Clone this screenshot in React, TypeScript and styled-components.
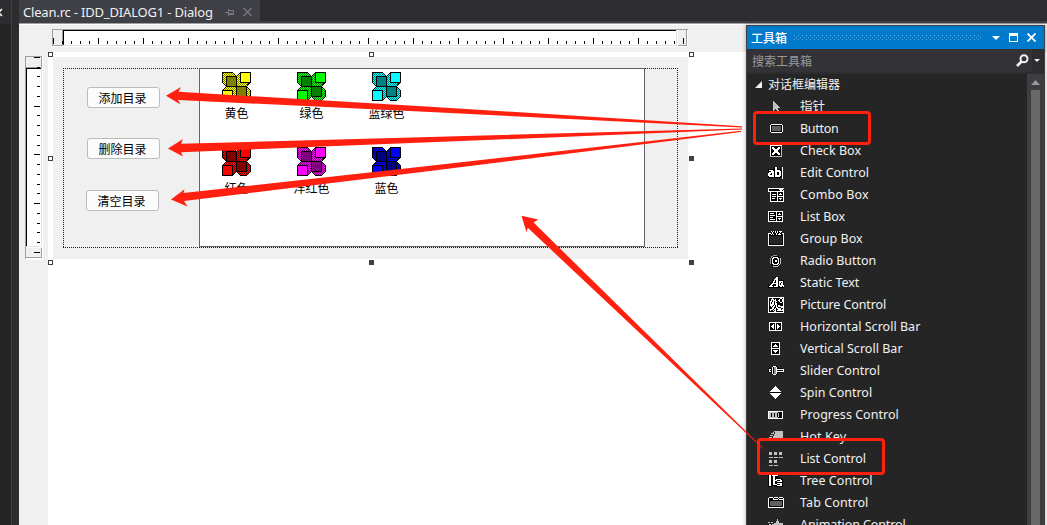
import React from "react";
import styled, { createGlobalStyle } from "styled-components";

const GlobalStyle = createGlobalStyle`
  * { box-sizing: border-box; }
  html, body { margin: 0; padding: 0; overflow: hidden; background: #fff; }
`;

const uiFont = `"Noto Sans", "Noto Sans CJK SC", sans-serif`;
const cjkFont = `"Noto Sans CJK SC", sans-serif`;

const Screen = styled.div`
  position: relative;
  display: flex;
  width: 1047px;
  height: 525px;
  overflow: hidden;
  background: #fff;
  font-family: ${uiFont};
`;

const SideDock = styled.aside`
  display: flex;
  width: 19px;
  flex: none;
  background: #2d2d30;
`;

const SideStrip = styled.div`
  width: 12px;
  background: #252526;
  border-right: 1px solid #3f3f46;
`;

const SideTab = styled.div`
  height: 24px;
  background: #2d2d30;
`;

const EditorPane = styled.main`
  display: flex;
  flex-direction: column;
  flex: 1;
  min-width: 0;
`;

const TabStrip = styled.header`
  display: flex;
  height: 24px;
  flex: none;
  background: #2d2d30;
  box-shadow: inset 0 -1px #a0a0a0, inset 0 -3px #3f3f46;
`;

const DocumentTab = styled.div`
  display: flex;
  align-items: center;
  width: 241px;
  height: 23px;
  padding: 0 0 0 4px;
  background: #3f3f46;
  color: #f1f1f1;
  font-size: 13px;
  letter-spacing: -0.18px;
  white-space: nowrap;
`;

const TabTitle = styled.span`
  width: 202px;
`;

const Workspace = styled.div`
  display: flex;
  flex-direction: column;
  flex: 1;
  background: #f0f0f0;
  border-top: 1px solid #fff;
`;

const HRulerRow = styled.div`
  height: 27px;
  flex: none;
  padding: 4px 0 0 33px;
`;

const DesignRow = styled.div`
  display: flex;
  flex: 1;
`;

const VRulerColumn = styled.div`
  width: 29px;
  flex: none;
  padding: 4px 0 0 6px;
`;

const Canvas = styled.div`
  position: relative;
  flex: 1;
  padding: 5px;
  background: #fff;
`;

const DialogSurface = styled.section`
  width: 635px;
  height: 202px;
  padding: 11px 10px;
  background: #f0f0f0;
`;

const dotsX = "repeating-linear-gradient(90deg, #0000ff 0 1px, #f0f0f0 1px 2px)";
const dotsY = "repeating-linear-gradient(180deg, #0000ff 0 1px, #f0f0f0 1px 2px)";

const MarginGuide = styled.div`
  display: flex;
  position: relative;
  width: 615px;
  height: 180px;
  padding: 1px;
  background:
    ${dotsX} 0 0 / 100% 1px no-repeat,
    ${dotsX} 0 100% / 100% 1px no-repeat,
    ${dotsY} 0 0 / 1px 100% no-repeat,
    ${dotsY} 100% 0 / 1px 100% no-repeat;
`;

const PushButton = styled.button<{ $x: number; $y: number }>`
  position: absolute;
  left: ${(p) => p.$x}px;
  top: ${(p) => p.$y}px;
  width: 73px;
  height: 21px;
  padding: 0 2px 1px 0;
  border: 1px solid #bcbcbc;
  border-radius: 3px;
  background: #fcfcfc;
  color: #000;
  font: 12px/19px ${cjkFont};
`;

const ListControl = styled.div`
  width: 446px;
  height: 179px;
  margin: -1px 0 0 135px;
  border: 1px solid #646464;
  background: #fff;
  display: grid;
  grid-template-columns: repeat(3, 75px);
  grid-auto-rows: 75px;
`;

const ListItem = styled.div`
  display: flex;
  flex-direction: column;
  align-items: center;
  padding: 3px 2px 0 0;
  gap: 2px;
  color: #000;
  font: 12px/20px ${cjkFont};
  white-space: nowrap;
`;

const Handle = styled.i<{ $x: number; $y: number; $solid?: boolean }>`
  position: absolute;
  left: ${(p) => p.$x}px;
  top: ${(p) => p.$y}px;
  width: 5px;
  height: 5px;
  border: 1px solid #404040;
  background: ${(p) => (p.$solid ? "#404040" : "#fff")};
`;

const ToolWindow = styled.aside`
  position: absolute;
  left: 746px;
  top: 25px;
  width: 299px;
  height: 510px;
  display: flex;
  flex-direction: column;
  border: 1px solid #3f3f46;
  background: #2d2d30;
  box-shadow: 0 0 4px rgba(0, 0, 0, 0.35);
`;

const TitleBar = styled.div`
  display: flex;
  align-items: center;
  height: 23px;
  flex: none;
  padding: 0 8px 0 4px;
  background: #007acc;
  color: #fff;
  font: 500 12px/22px ${cjkFont};
`;

const Caption = styled.span`
  width: 43px;
`;

const TitleGlyphs = styled.div`
  display: flex;
  align-items: center;
  gap: 9px;
  margin-left: auto;
`;

const SearchRow = styled.div`
  display: flex;
  align-items: center;
  height: 23px;
  flex: none;
  padding-left: 5px;
  background: #333337;
  color: #999;
  font: 12px/22px ${cjkFont};
`;

const SearchIcon = styled.div`
  display: flex;
  align-items: center;
  justify-content: flex-end;
  margin-left: auto;
  width: 20px;
  padding-right: 3px;
`;

const SearchDrop = styled.div`
  display: flex;
  align-items: center;
  justify-content: center;
  width: 12px;
  height: 23px;
  padding-right: 2px;
  background: #2d2d30;
`;

const ToolBody = styled.div`
  display: flex;
  flex: 1;
  min-height: 0;
  margin-top: 2px;
  overflow: hidden;
  background: #252526;
`;

const ToolList = styled.ul`
  flex: 1;
  margin: 0;
  padding: 0;
  list-style: none;
  overflow: hidden;
`;

const GroupHeader = styled.li`
  display: flex;
  align-items: center;
  gap: 6px;
  height: 22px;
  padding: 0 0 2px 8px;
  color: #f1f1f1;
  font: 12px/20px ${cjkFont};
`;

const ToolRow = styled.li`
  display: flex;
  align-items: center;
  gap: 16px;
  height: 22px;
  padding-left: 21px;
  color: #f1f1f1;
  font: 12.5px/22px ${uiFont};
  white-space: nowrap;
`;

const ToolLabel = styled.span<{ $spacing: number }>`
  letter-spacing: ${(p) => p.$spacing}px;
`;

const ScrollBar = styled.div`
  display: flex;
  flex-direction: column;
  align-items: center;
  width: 17px;
  padding-top: 6px;
  background: #3e3e42;
`;

const ScrollThumb = styled.div`
  width: 9px;
  flex: 1;
  margin-top: 5px;
  background: #686868;
`;

const Highlight = styled.div<{ $x: number; $y: number; $w: number; $h: number }>`
  position: absolute;
  left: ${(p) => p.$x}px;
  top: ${(p) => p.$y}px;
  width: ${(p) => p.$w}px;
  height: ${(p) => p.$h}px;
  border: 3px solid #ff2010;
  border-radius: 4px;
`;

const Arrows = styled.svg`
  position: absolute;
  left: 0;
  top: 0;
  pointer-events: none;
`;

const inks: Record<string, string> = {
  "#": "#ffffff",
  k: "#000000",
  g: "#c0c0c0",
  d: "#606060",
  m: "#999999",
};

/* Each character of a row is one pixel of a 16-pixel toolbox glyph. */
function PixelIcon({ rows }: { rows: string[] }) {
  const top = Math.floor((16 - rows.length) / 2);
  return (
    <svg width="16" height="16" shapeRendering="crispEdges">
      {rows.flatMap((row, y) =>
        [...row].map((c, x) =>
          inks[c] ? <rect key={`${x}-${y}`} x={x} y={y + top} width="1" height="1" fill={inks[c]} /> : null
        )
      )}
    </svg>
  );
}

const glyphs: Record<string, string[]> = {
  pointer: [
    ".....g..........",
    ".....gg.........",
    ".....ggg........",
    ".....gggg.......",
    ".....ggggg......",
    ".....gggggg.....",
    ".....ggggggg....",
    ".....ggggg......",
    ".....gg.gg......",
    ".....g...gg.....",
    ".........gg.....",
    "................",
  ],
  button: [
    "...###########..",
    "..#kkkkkkkkkkk#.",
    "..#kdddddddddk#.",
    "..#kdddddddddk#.",
    "..#kdddddddddk#.",
    "..#kdddddddddk#.",
    "..#kdddddddddk#.",
    "..#kkkkkkkkkkk#.",
    "...###########..",
  ],
  check: [
    "..############..",
    "..#kkkkkkkkkkg..",
    "..#k##kkkk##kg..",
    "..#k###kk###kg..",
    "..#kk######kkg..",
    "..#kkk####kkkg..",
    "..#kkk####kkkg..",
    "..#kk######kkg..",
    "..#k###kk###kg..",
    "..#k##kkkk##kg..",
    "..#kkkkkkkkkkg..",
    "..gggggggggggg..",
  ],
  edit: [
    "......k##k....#.",
    "......k##k....#.",
    "kkkkkkk##kkkk.#.",
    "k####kk#####kk#.",
    "kkk###k######k#.",
    "k#####k##kk##k#.",
    "###k##k##kk##k#.",
    "##kk##k##kk##k#.",
    "######k######k#.",
    "k#####k#####kk#.",
    "kkkkkkkkkkkkk.#.",
    "..............#.",
  ],
  combo: [
    "################",
    "#kkkkkkkkkk####k",
    "#kkkkkkkkkkk##k#",
    "################",
    "..#kkkkkk#kkkkk#",
    "..#kkkkkk#kk#kk#",
    "..#k####k#k###k#",
    "..#kkkkkk#kkkkk#",
    "..#k####k#######",
    "..#kkkkkk#kkkkk#",
    "..#k###kk#k###k#",
    "..#kkkkkk#kk#kk#",
    "..#kkkkkk#kkkkk#",
    "..##############",
  ],
  listbox: [
    "###############.",
    "#kkkkkkk#kkkkk#.",
    "#k####kk#kk#kk#.",
    "#kkkkkkk#k###k#.",
    "#k#####k#kkkkk#.",
    "#kkkkkkk#######.",
    "#k###kkk#kkkkk#.",
    "#kkkkkkk#k###k#.",
    "#k#####k#kk#kk#.",
    "#kkkkkkk#kkkkk#.",
    "###############.",
  ],
  group: [
    "...#k#k#k#k###..",
    "...k#kk#k#kk#k..",
    "###k#kkk#kk#kk##",
    "#kk#k#kk#k###kk#",
    "#kkkkkkkkkkkkkk#",
    "#k............k#",
    "#k............k#",
    "#k............k#",
    "#k............k#",
    "#k............k#",
    "#k............k#",
    "#k............k#",
    "#k............k#",
    "#kkkkkkkkkkkkkk#",
    "################",
  ],
  radio: [
    ".....mmmm.......",
    "...mmkkkkkk.....",
    "...mk#####kk....",
    "..mk##kkk##kg...",
    "..mk#kkkkk#kg...",
    "..mk#kk##k#kg...",
    "..mk#kk##k#kg...",
    "..mk#kkkkk#kg...",
    "..mk##kkk##kg...",
    "...kk#####kg....",
    "....kkkkkkg.....",
    ".....ggggg......",
  ],
  text: [
    ".......k##k.....",
    "......k###k.....",
    ".....k####k.....",
    ".....k#k##kkkkkk",
    "....k##k##k####k",
    "....k#kk##k##k#k",
    "...k######k#k##k",
    "..k##kkk##k#k##k",
    "kk##kkkk##k#####",
    "k####k####kk##k#",
    "kkkkkkkkkkkkkkkk",
  ],
  picture: [
    "################",
    "#kkk#kkkkkkk##k#",
    "#kk###k#kkk#kk##",
    "#kk#k###kk##kk##",
    "#k##k#k##kk#kk##",
    "#k#k##k#kkkk##k#",
    "#k#k##k##kkkkkk#",
    "#k####k##kkkkkk#",
    "#k###k#k#k##kkk#",
    "#kk#k##k#k#####k#",
    "#kkk##kk##kkk###",
    "#kkk##k#k####kk#",
    "#k###k##kk###k##",
    "#k#kk#k#k######k#",
    "#kkkkk##kkkkkkk#",
    "################",
  ].map((row) => row.slice(0, 15) + "#"),
  hscroll: [
    ".#############..",
    ".#kkkkk#kkkkk#..",
    ".#kkk#k#k#kkk#..",
    ".#kk##k#k##kk#..",
    ".#k###k#k###k#..",
    ".#kk##k#k##kk#..",
    ".#kkk#k#k#kkk#..",
    ".#kkkkk#kkkkk#..",
    ".#############..",
  ],
  vscroll: [
    "...#########....",
    "...#kkkkkkk#....",
    "...#kkk#kkk#....",
    "...#kk###kk#....",
    "...#k#####k#....",
    "...#kkkkkkk#....",
    "...#########....",
    "...#kkkkkkk#....",
    "...#k#####k#....",
    "...#kk###kk#....",
    "...#kkk#kkk#....",
    "...#kkkkkkk#....",
    "...#########....",
  ],
  slider: [
    "....k###k.......",
    "....#kmm#k......",
    ".kkk#kmm#kkkkkk.",
    "k##k#kmm########",
    "k#kk#kmm#kkkkkk#",
    "k##k#kmm########",
    ".kkk#kmm#kkkkkk.",
    "....#kmm#k......",
    "....k###k.......",
  ],
  spin: [
    ".......#........",
    "......###.......",
    ".....#####......",
    "....#######.....",
    "...#########....",
    "..###########...",
    "..kkkkkkkkkkk...",
    "..###########...",
    "...#########....",
    "....#######.....",
    ".....#####......",
    "......###.......",
    ".......#........",
  ],
  progress: [
    "###############.",
    "#gggggggggkkkk#.",
    "#ggkggkggkgkkk#.",
    "#ggkggkggkgkkk#.",
    "#ggkggkggkgkkk#.",
    "#ggkggkggkgkkk#.",
    "#gggggggggkkkk#.",
    "###############.",
  ],
  hotkey: [
    "......ggggggggg.",
    ".....g.gggggggg.",
    "...ggg.gggggggg.",
    "......ggggggggg.",
    "..ggg.ggggggggg.",
    ".....gggggggggg.",
    ".ggg.gggggggggg.",
    "....ggggggggggg.",
    "ggg.ggggggggggg.",
    "................",
    "................",
  ],
  list: [
    ".ggg..ggg..ggg..",
    ".ggg..ggg..ggg..",
    ".ggg..ggg..ggg..",
    "................",
    "................",
    ".gggg.gggg.gggg.",
    "................",
    "................",
    ".ggg..ggg.......",
    ".ggg..ggg.......",
    ".ggg..ggg.......",
    "................",
    "................",
    ".gggg.gggg......",
  ],
  tree: [
    "k##kkkkkkk......",
    "k##k######k.....",
    "k##kk##kkkk.....",
    "k##kk##kkk......",
    "k##kk##kkkkkkk..",
    "k##kk##k#####kk.",
    "k##kk####kkk##k.",
    "k##kk##kk#####k.",
    "k##kk##kkkkkkkk.",
    "k##kk##kk#####k.",
    "k##kk####kkk##k.",
    "k##kkkkkk#####k.",
    "kkkk...kkkkkkkk.",
  ],
  tab: [
    ".####.####.####.",
    "#kkkk#kkkk#kkkk#",
    "#kkkk#####k#####",
    "#kkkkkkkkkkkkkk#",
    "#kddddddddddddk#",
    "#kddddddddddddk#",
    "#kddddddddddddk#",
    "#kddddddddddddk#",
    "#kddddddddddddk#",
    "#kkkkkkkkkkkkkk#",
    "################",
  ],
  animation: [
    ".........g......",
    ".........g......",
    "........ggg.....",
    "gg.gg...ggg.....",
    "......ggggggggg.",
    ".gg.ggggggggggg.",
    "........ggggg...",
    "..gg.gg.ggggg...",
    ".......gggggg...",
    ".......gg..gg...",
    "......g......g..",
    "................",
  ],
};

const tools: [string, string, number][] = [
  ["pointer", "指针", 0],
  ["button", "Button", -0.3],
  ["check", "Check Box", 0.05],
  ["edit", "Edit Control", 0],
  ["combo", "Combo Box", 0.1],
  ["listbox", "List Box", -0.05],
  ["group", "Group Box", 0.05],
  ["radio", "Radio Button", -0.05],
  ["text", "Static Text", 0],
  ["picture", "Picture Control", -0.1],
  ["hscroll", "Horizontal Scroll Bar", 0.03],
  ["vscroll", "Vertical Scroll Bar", 0.03],
  ["slider", "Slider Control", 0],
  ["spin", "Spin Control", 0],
  ["progress", "Progress Control", 0.03],
  ["hotkey", "Hot Key", 0.1],
  ["list", "List Control", -0.08],
  ["tree", "Tree Control", 0.05],
  ["tab", "Tab Control", 0.1],
  ["animation", "Animation Control", -0.1],
];

const colours = [
  { id: "yellow", label: "黄色", light: "#ffff00", dark: "#808000" },
  { id: "green", label: "绿色", light: "#00ff00", dark: "#008000" },
  { id: "cyan", label: "蓝绿色", light: "#00ffff", dark: "#008080" },
  { id: "red", label: "红色", light: "#ff0000", dark: "#800000" },
  { id: "magenta", label: "洋红色", light: "#ff00ff", dark: "#800080" },
  { id: "blue", label: "蓝色", light: "#0000ff", dark: "#000080" },
];

function Flower({ id, light, dark }: { id: string; light: string; dark: string }) {
  return (
    <svg width="29" height="29" shapeRendering="crispEdges">
      <defs>
        <pattern id={id} width="2" height="2" patternUnits="userSpaceOnUse">
          <rect width="2" height="2" fill={light} />
          <rect width="1" height="1" fill={dark} />
          <rect x="1" y="1" width="1" height="1" fill={dark} />
        </pattern>
      </defs>
      <path
        d="M.5.5H10.5L14.5 4.5 18.5.5H28.5V9.5L24.5 14.5 28.5 18.5V24.5L24.5 28.5H18.5L14.5 24.5 10.5 28.5H.5V18.5L4.5 14.5.5 10.5Z"
        fill={`url(#${id})`}
        stroke="#000"
      />
      <g stroke="#000">
        <path d="M4.5 4.5h10v10h-10zM14.5 14.5h10v10h-10z" fill={dark} />
        <path d="M18.5.5h10v10h-10zM.5 18.5h10v10h-10z" fill={light} />
      </g>
    </svg>
  );
}

function HorizontalRuler() {
  const ticks = Array.from({ length: 71 }, (_, k) => k);
  return (
    <svg width="640" height="18" shapeRendering="crispEdges">
      <path d="M0 0h636v18H0z" fill="#fff" />
      <path d="M0 0h636v1H0zM0 0h1v17H0z" fill="#a0a0a0" />
      <path d="M1 1h10v15H1z" fill="#f0f0f0" />
      <path d="M1 16h10v1H1zM10 1h1v15h-1z" fill="#a0a0a0" />
      <path d="M11 1h614v1H11zM11 1h1v15h-1z" fill="#000" />
      <path d="M12 16h613v1H12zM624 1h1v15h-1z" fill="#e3e3e3" />
      <path d="M626 1h8v15h-8z" fill="#f0f0f0" />
      <path d="M626 16h8v1h-8zM634 0h1v17h-1z" fill="#a0a0a0" />
      {ticks.map((k) => (
        <rect key={k} x={1 + k * 9} y={k % 5 ? 12 : 9} width="1" height={k % 5 ? 3 : 6} fill="#000" />
      ))}
    </svg>
  );
}

function VerticalRuler() {
  const ticks = Array.from({ length: 21 }, (_, k) => k);
  return (
    <svg width="18" height="204" shapeRendering="crispEdges">
      <path d="M0 0h18v204H0z" fill="#fff" />
      <path d="M0 0h17v1H0zM0 0h1v203H0z" fill="#a0a0a0" />
      <path d="M1 1h15v10H1z" fill="#f0f0f0" />
      <path d="M16 0h1v12h-1zM1 11h16v1H1z" fill="#a0a0a0" />
      <path d="M1 12h15v1H1zM1 12h1v178H1z" fill="#000" />
      <path d="M16 12h1v178h-1zM1 190h15v1H1z" fill="#e3e3e3" />
      <path d="M1 192h15v9H1z" fill="#f0f0f0" />
      <path d="M0 201h17v1H0zM16 192h1v10h-1z" fill="#a0a0a0" />
      {ticks.map((k) => (
        <rect
          key={k}
          x={k % 5 ? 12 : 9}
          y={Math.floor(1.4 + k * 9.75)}
          width={k % 5 ? 3 : 6}
          height="1"
          fill="#000"
        />
      ))}
    </svg>
  );
}

export default function App() {
  return (
    <Screen>
      <GlobalStyle />
      <SideDock>
        <SideStrip>
          <SideTab>
            <svg width="4" height="24" overflow="hidden">
              <path d="M-5 9l7 7M2 9l-7 7" stroke="#f1f1f1" strokeWidth="1.6" />
            </svg>
          </SideTab>
        </SideStrip>
      </SideDock>
      <EditorPane>
        <TabStrip>
          <DocumentTab>
            <TabTitle>Clean.rc - IDD_DIALOG1 - Dialog</TabTitle>
            <svg width="30" height="10" fill="none" stroke="#77777d">
              <path d="M0 5.5h3M3.5 2v7M3.5 3.5h5v4h-5M4 6.5h4" />
              <path d="M18.5 1l8 8M26.5 1l-8 8" strokeWidth="1.5" />
            </svg>
          </DocumentTab>
        </TabStrip>
        <Workspace>
          <HRulerRow>
            <HorizontalRuler />
          </HRulerRow>
          <DesignRow>
            <VRulerColumn>
              <VerticalRuler />
            </VRulerColumn>
            <Canvas>
              <DialogSurface>
                <MarginGuide>
                  <PushButton $x={24} $y={19}>添加目录</PushButton>
                  <PushButton $x={24} $y={70}>删除目录</PushButton>
                  <PushButton $x={23} $y={122}>清空目录</PushButton>
                  <ListControl>
                    {colours.map((c) => (
                      <ListItem key={c.id}>
                        <Flower id={c.id} light={c.light} dark={c.dark} />
                        {c.label}
                      </ListItem>
                    ))}
                  </ListControl>
                </MarginGuide>
              </DialogSurface>
              <Handle $x={0} $y={0} />
              <Handle $x={321} $y={0} />
              <Handle $x={641} $y={0} />
              <Handle $x={0} $y={104} />
              <Handle $x={641} $y={104} $solid />
              <Handle $x={0} $y={208} />
              <Handle $x={321} $y={208} $solid />
              <Handle $x={641} $y={208} $solid />
            </Canvas>
          </DesignRow>
        </Workspace>
      </EditorPane>

      <ToolWindow>
        <TitleBar>
          <Caption>工具箱</Caption>
          <svg width="188" height="5" shapeRendering="crispEdges">
            <defs>
              <pattern id="grip" width="4" height="4" patternUnits="userSpaceOnUse">
                <path d="M0 0h1v1H0zM2 2h1v1H2z" fill="#59a8de" />
              </pattern>
            </defs>
            <rect width="188" height="5" fill="url(#grip)" />
          </svg>
          <TitleGlyphs>
            <svg width="8" height="4"><path d="M0 0h8L4 4z" fill="#fff" /></svg>
            <svg width="9" height="9" shapeRendering="crispEdges">
              <path d="M0 0h9v9H0zM1 3v5h7V3z" fill="#fff" fillRule="evenodd" />
            </svg>
            <svg width="9" height="9"><path d="M.5.5l8 8M8.5.5l-8 8" stroke="#fff" strokeWidth="1.7" /></svg>
          </TitleGlyphs>
        </TitleBar>
        <SearchRow>
          搜索工具箱
          <SearchIcon>
            <svg width="13" height="13" fill="none" stroke="#f1f1f1">
              <circle cx="8" cy="4.7" r="3.5" strokeWidth="2" />
              <path d="M5.5 7.5L1 12" strokeWidth="2.6" />
            </svg>
          </SearchIcon>
          <SearchDrop>
            <svg width="6" height="3"><path d="M0 0h6L3 3z" fill="#f1f1f1" /></svg>
          </SearchDrop>
        </SearchRow>
        <ToolBody>
          <ToolList>
            <GroupHeader>
              <svg width="7" height="7"><path d="M7 0v7H0z" fill="#f1f1f1" /></svg>
              对话框编辑器
            </GroupHeader>
            {tools.map(([icon, label, spacing]) => (
              <ToolRow key={icon}>
                <PixelIcon rows={glyphs[icon]} />
                <ToolLabel $spacing={spacing}>{label}</ToolLabel>
              </ToolRow>
            ))}
          </ToolList>
          <ScrollBar>
            <svg width="9" height="5"><path d="M4.5 0L9 5H0z" fill="#999" /></svg>
            <ScrollThumb />
          </ScrollBar>
        </ToolBody>
      </ToolWindow>

      <Highlight $x={753} $y={111} $w={118} $h={34} />
      <Highlight $x={757} $y={438} $w={128} $h={37} />
      <Arrows width="1047" height="525" fill="#ff2010">
        <path d="M166 95.7L181 87 178.5 91.8 430 106.7 742 126.3V127.5L430 112 178 100 180.5 104.5Z" />
        <path d="M168 148.4L183 139 181 143.8 430 137 742 128.4V129.6L430 142.3 181 152.3 183 156.5Z" />
        <path d="M171 199.4L184.5 189.3 183.5 193 430 165.8 741 130.8V132L430 171 184 201 187.5 206.5Z" />
        <path d="M521.5 215.8L538.3 219.5 533.6 222.6 643 330 763 448V449L636.5 330 527.8 227.8 526.5 232.3Z" />
      </Arrows>
    </Screen>
  );
}
